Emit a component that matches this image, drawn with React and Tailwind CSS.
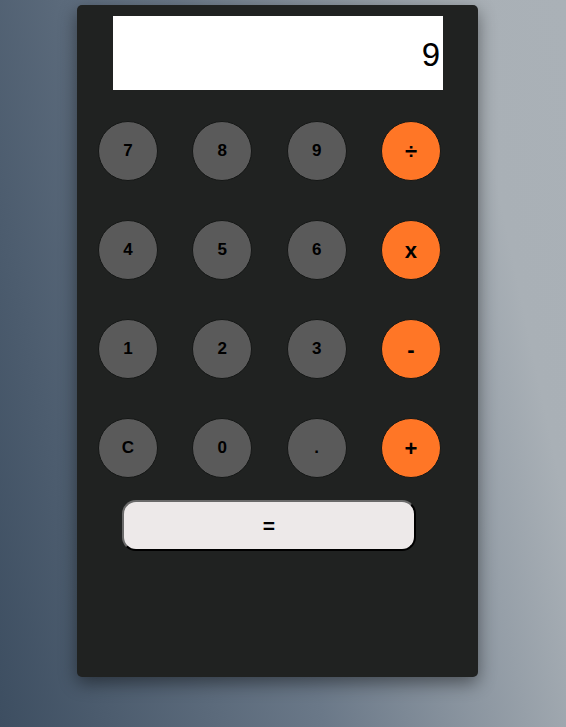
import React, { useState } from "react";

const keys = [
    { label: "7" }, { label: "8" }, { label: "9" }, { label: "÷", op: true },
    { label: "4" }, { label: "5" }, { label: "6" }, { label: "x", op: true },
    { label: "1" }, { label: "2" }, { label: "3" }, { label: "-", op: true },
    { label: "C" }, { label: "0" }, { label: "." }, { label: "+", op: true },
];

export default function App() {
    const [value, setValue] = useState("9");

    const press = (k) => {
        if (k === "C") return setValue("");
        setValue((v) => v + (k === "x" ? "*" : k === "÷" ? "/" : k));
    };

    const evaluate = () => {
        try {
            // eslint-disable-next-line no-new-func
            setValue(String(Function(`return (${value})`)()));
        } catch {
            setValue("Error");
        }
    };

    return (
        <div className="min-h-[727px] w-full overflow-hidden bg-[linear-gradient(78deg,#3d4e61_0%,#6a7888_45%,#a9b0b6_85%,#aab1b7_100%)] font-['Liberation_Sans',Arial,sans-serif] pt-[5px]">
            <div className="ml-[77px] w-[401px] h-[672px] rounded-[5px] bg-[#202221] shadow-[0_6px_18px_rgba(0,0,0,0.45)] pt-[11px]">
                <div className="mx-[36px] h-[74px] w-[330px] bg-white flex items-center justify-end pr-[3px] pt-[2px]">
                    <span className="text-[33px] leading-none text-black">{value}</span>
                </div>

                <div className="mt-[31px] ml-[21px] w-[343px] grid grid-cols-[repeat(4,60px)] justify-between gap-y-[39px]">
                    {keys.map((k) => (
                        <button
                            key={k.label}
                            onClick={() => press(k.label)}
                            className={`h-[60px] w-[60px] rounded-full border border-[#151716] flex items-center justify-center font-bold text-black ${
                                k.op ? "bg-[#ff7626] text-[22px]" : "bg-[#5a5a5a] text-[17px]"
                            }`}
                        >
                            {k.label}
                        </button>
                    ))}
                </div>

                <button
                    onClick={evaluate}
                    className="mt-[22px] ml-[45px] w-[294px] h-[51px] rounded-[14px] bg-[#ede9e9] border-2 border-t-[#6a6a6a] border-l-[#6a6a6a] border-r-black border-b-black text-[21px] font-bold text-black flex items-center justify-center"
                >
                    =
                </button>
            </div>
        </div>
    );
}
